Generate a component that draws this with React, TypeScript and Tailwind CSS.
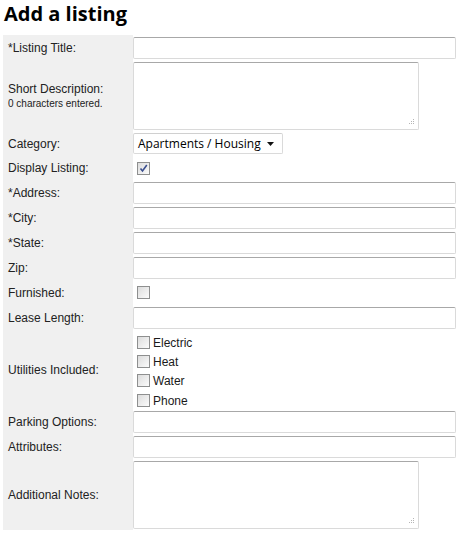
import React from "react";

const fieldBox =
  "border border-[#dadada] border-t-[#a8a8a8] rounded-[2px] bg-white";

const TextBox: React.FC = () => <div className={`${fieldBox} w-[323px] h-[22px]`} />;

const Grip: React.FC = () => (
  <svg
    className="absolute right-[3px] bottom-[3px]"
    width="7"
    height="7"
    viewBox="0 0 7 7"
    aria-hidden="true"
  >
    <rect x="5" y="0" width="1" height="1" fill="#b5b5b5" />
    <rect x="3" y="2" width="1" height="1" fill="#b5b5b5" />
    <rect x="5" y="2" width="1" height="1" fill="#b5b5b5" />
    <rect x="1" y="4" width="1" height="1" fill="#b5b5b5" />
    <rect x="3" y="4" width="1" height="1" fill="#b5b5b5" />
    <rect x="5" y="4" width="1" height="1" fill="#b5b5b5" />
  </svg>
);

const TextArea: React.FC = () => (
  <div className={`${fieldBox} relative w-[286px] h-[68px]`}>
    <Grip />
  </div>
);

const Check: React.FC<{ checked?: boolean }> = ({ checked }) => (
  <span className="relative inline-block w-[13px] h-[13px] border border-[#8e8f8f] bg-gradient-to-br from-[#dcdcdc] to-[#fbfbfb] shrink-0">
    {checked && (
      <svg
        className="absolute left-[1px] top-[1px]"
        width="9"
        height="9"
        viewBox="0 0 9 9"
        aria-hidden="true"
      >
        <path d="M1.5 4.5 L3.5 7 L7.8 1" fill="none" stroke="#3b4f8f" strokeWidth="1.6" />
      </svg>
    )}
  </span>
);

const Row: React.FC<{
  label: React.ReactNode;
  h: string;
  children: React.ReactNode;
  cell?: string;
}> = ({ label, h, children, cell = "pt-[2px]" }) => (
  <div className={`flex ${h}`}>
    <div className="w-[130px] bg-[#f0f0f0] pl-[5px] flex items-center text-[12px] text-[#222]">
      {label}
    </div>
    <div className={cell}>{children}</div>
  </div>
);

export default function App() {
  return (
    <div className="bg-white w-[468px] h-[541px] font-['Liberation_Sans',Arial,sans-serif] text-[#1a1a1a]">
      <h1 className="font-['Open_Sans',sans-serif] font-bold text-[20px] leading-[26px] pl-[4px] pt-[1px] h-[35px] text-black">
        Add a listing
      </h1>
      <div className="pl-[3px]">
        <Row label="*Listing Title:" h="h-[25px]">
          <TextBox />
        </Row>
        <Row
          label={
            <div className="pt-[2px]">
              <div className="leading-[15px]">Short Description:</div>
              <div className="text-[10px] leading-[14px]">0 characters entered.</div>
            </div>
          }
          h="h-[71px]"
        >
          <TextArea />
        </Row>
        <Row label="Category:" h="h-[25px]">
          <div className={`${fieldBox} border-t-[#d0d0d0] w-[150px] h-[21px] flex items-center justify-between pl-[4px] pr-[8px] font-['Open_Sans',sans-serif] text-[12px] text-black whitespace-nowrap`}>
            <span>Apartments / Housing</span>
            <svg width="7" height="4" viewBox="0 0 7 4" aria-hidden="true">
              <path d="M0 0 L7 0 L3.5 4 Z" fill="#111" />
            </svg>
          </div>
        </Row>
        <Row label="Display Listing:" h="h-[24px]" cell="flex items-center pl-[4px]">
          <Check checked />
        </Row>
        <Row label="*Address:" h="h-[25px]">
          <TextBox />
        </Row>
        <Row label="*City:" h="h-[25px]">
          <TextBox />
        </Row>
        <Row label="*State:" h="h-[25px]">
          <TextBox />
        </Row>
        <Row label="Zip:" h="h-[25px]">
          <TextBox />
        </Row>
        <Row label="Furnished:" h="h-[25px]" cell="flex items-center pl-[4px]">
          <Check />
        </Row>
        <Row label="Lease Length:" h="h-[25px]">
          <TextBox />
        </Row>
        <Row label="Utilities Included:" h="h-[79px]" cell="pt-[3px] pl-[4px]">
          {["Electric", "Heat", "Water", "Phone"].map((u, i) => (
            <div
              key={u}
              className={`flex items-center gap-[3px] text-[12px] ${i === 3 ? "h-[21px]" : "h-[19px]"}`}
            >
              <Check />
              <span>{u}</span>
            </div>
          ))}
        </Row>
        <Row label="Parking Options:" h="h-[25px]">
          <TextBox />
        </Row>
        <Row label="Attributes:" h="h-[25px]">
          <TextBox />
        </Row>
        <Row label="Additional Notes:" h="h-[71px]">
          <TextArea />
        </Row>
      </div>
    </div>
  );
}
